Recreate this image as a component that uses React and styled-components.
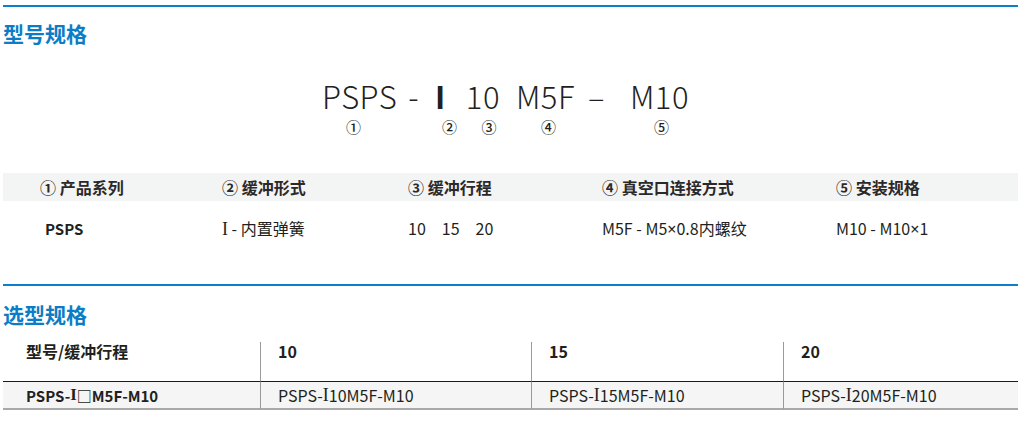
import React from "react";
import styled, { createGlobalStyle } from "styled-components";

const GlobalStyle = createGlobalStyle`
  html, body {
    margin: 0;
    padding: 0;
    background: #ffffff;
  }
  body {
    font-family: "Noto Sans CJK SC", "Noto Sans", sans-serif;
    color: #231f20;
  }
`;

const Page = styled.div`
  width: 1015px;
  margin-left: 3px;
  padding-top: 5px;
`;

const Rule = styled.div`
  height: 2px;
  background: #0a80cb;
  margin-top: ${(p) => p.$top || 0}px;
`;

const Title = styled.h2`
  margin: ${(p) => p.$top}px 0 0 0;
  font-size: 21px;
  line-height: 24px;
  font-weight: 700;
  color: #0b7dc6;
`;

const CodeLine = styled.div`
  display: flex;
  align-items: flex-start;
  margin-top: 36px;
  padding-left: 319px;
`;

const Seg = styled.div`
  display: flex;
  flex-direction: column;
  align-items: center;
  margin-left: ${(p) => p.$gap || 0}px;
`;

const Code = styled.span`
  font-size: 31px;
  line-height: 30px;
  font-weight: ${(p) => (p.$heavy ? 700 : 300)};
  letter-spacing: 0.5px;
  color: #231f20;
`;

const Mark = styled.span`
  width: 0;
  display: flex;
  justify-content: center;
  margin-top: 7px;
  font-size: 15px;
  line-height: 18px;
  height: 18px;
  font-weight: 500;
  color: #231f20;
  white-space: nowrap;
  transform: translateX(${(p) => p.$shift || 0}px);
`;

const SpecGrid = styled.div`
  display: grid;
  grid-template-columns: 182px 186px 194px 234px 1fr;
  padding-left: 37px;
  align-items: center;
`;

const SpecHead = styled(SpecGrid)`
  margin-top: 37px;
  height: 28px;
  background: #f3f4f4;
`;

const SpecRow = styled(SpecGrid)`
  height: 54px;
`;

const HeadCell = styled.div`
  font-size: 16px;
  font-weight: 700;
  color: #2b2829;
  white-space: nowrap;
`;

const DataCell = styled.div`
  display: flex;
  align-items: baseline;
  gap: ${(p) => p.$gap || 0}px;
  font-size: ${(p) => (p.$bold ? 15 : 16)}px;
  font-weight: ${(p) => (p.$bold ? 700 : 400)};
  padding-left: ${(p) => p.$indent || 0}px;
  color: #231f20;
  white-space: pre;
`;

const Roman = styled.span`
  font-family: "Liberation Serif", serif;
  font-size: 1.12em;
`;

const Times = styled.span`
  font-family: "Noto Sans", sans-serif;
`;

const Table = styled.div`
  display: grid;
  grid-template-columns: 257px 271px 252px 1fr;
  margin-top: 16px;
`;

const TH = styled.div`
  height: 40px;
  box-sizing: border-box;
  padding: 0 0 0 ${(p) => p.$pad}px;
  border-left: ${(p) => (p.$divided ? "1px solid #9a9a9a" : "none")};
  border-bottom: 1px solid #231815;
  font-size: 16px;
  line-height: 18px;
  font-weight: 700;
  color: #231f20;
`;

const TD = styled.div`
  height: 28px;
  box-sizing: border-box;
  display: flex;
  align-items: center;
  padding-left: ${(p) => p.$pad}px;
  background: #f4f5f4;
  border-left: ${(p) => (p.$divided ? "1px solid #9a9a9a" : "none")};
  border-bottom: 2px solid #a9a9a9;
  font-size: ${(p) => (p.$bold ? 15 : 16)}px;
  font-weight: ${(p) => (p.$bold ? 700 : 400)};
  color: #231f20;
  white-space: pre;
`;

const segments = [
  { text: "PSPS", mark: "①", gap: 0, shift: -6 },
  { text: "-", gap: 11 },
  { text: "I", mark: "②", gap: 16, shift: 9, heavy: true },
  { text: "10", mark: "③", gap: 20, shift: 6 },
  { text: "M5F", mark: "④", gap: 16, shift: 3 },
  { text: "–", gap: 13 },
  { text: "M10", mark: "⑤", gap: 25, shift: 2 },
];

const specHeads = ["① 产品系列", "② 缓冲形式", "③ 缓冲行程", "④ 真空口连接方式", "⑤ 安装规格"];

const strokes = ["10", "15", "20"];

export default function App() {
  return (
    <Page>
      <GlobalStyle />
      <Rule />
      <Title $top={14}>型号规格</Title>

      <CodeLine>
        {segments.map((s, i) => (
          <Seg key={i} $gap={s.gap}>
            <Code $heavy={s.heavy}>{s.text}</Code>
            <Mark $shift={s.shift}>{s.mark || ""}</Mark>
          </Seg>
        ))}
      </CodeLine>

      <SpecHead>
        {specHeads.map((h) => (
          <HeadCell key={h}>{h}</HeadCell>
        ))}
      </SpecHead>
      <SpecRow>
        <DataCell $bold $indent={5}>PSPS</DataCell>
        <DataCell>
          <Roman>I</Roman> - 内置弹簧
        </DataCell>
        <DataCell $gap={16}>
          {strokes.map((s) => (
            <span key={s}>{s}</span>
          ))}
        </DataCell>
        <DataCell>
          M5F - M5<Times>×</Times>0.8内螺纹
        </DataCell>
        <DataCell>
          M10 - M10<Times>×</Times>1
        </DataCell>
      </SpecRow>

      <Rule $top={29} />
      <Title $top={16}>选型规格</Title>

      <Table>
        <TH $pad={23}>型号/缓冲行程</TH>
        {strokes.map((s) => (
          <TH key={s} $pad={17} $divided>
            {s}
          </TH>
        ))}
        <TD $pad={23} $bold>
          PSPS-<Roman>I</Roman>□M5F-M10
        </TD>
        {strokes.map((s) => (
          <TD key={s} $pad={17} $divided>
            PSPS-<Roman>I</Roman>
            {s}M5F-M10
          </TD>
        ))}
      </Table>
    </Page>
  );
}
